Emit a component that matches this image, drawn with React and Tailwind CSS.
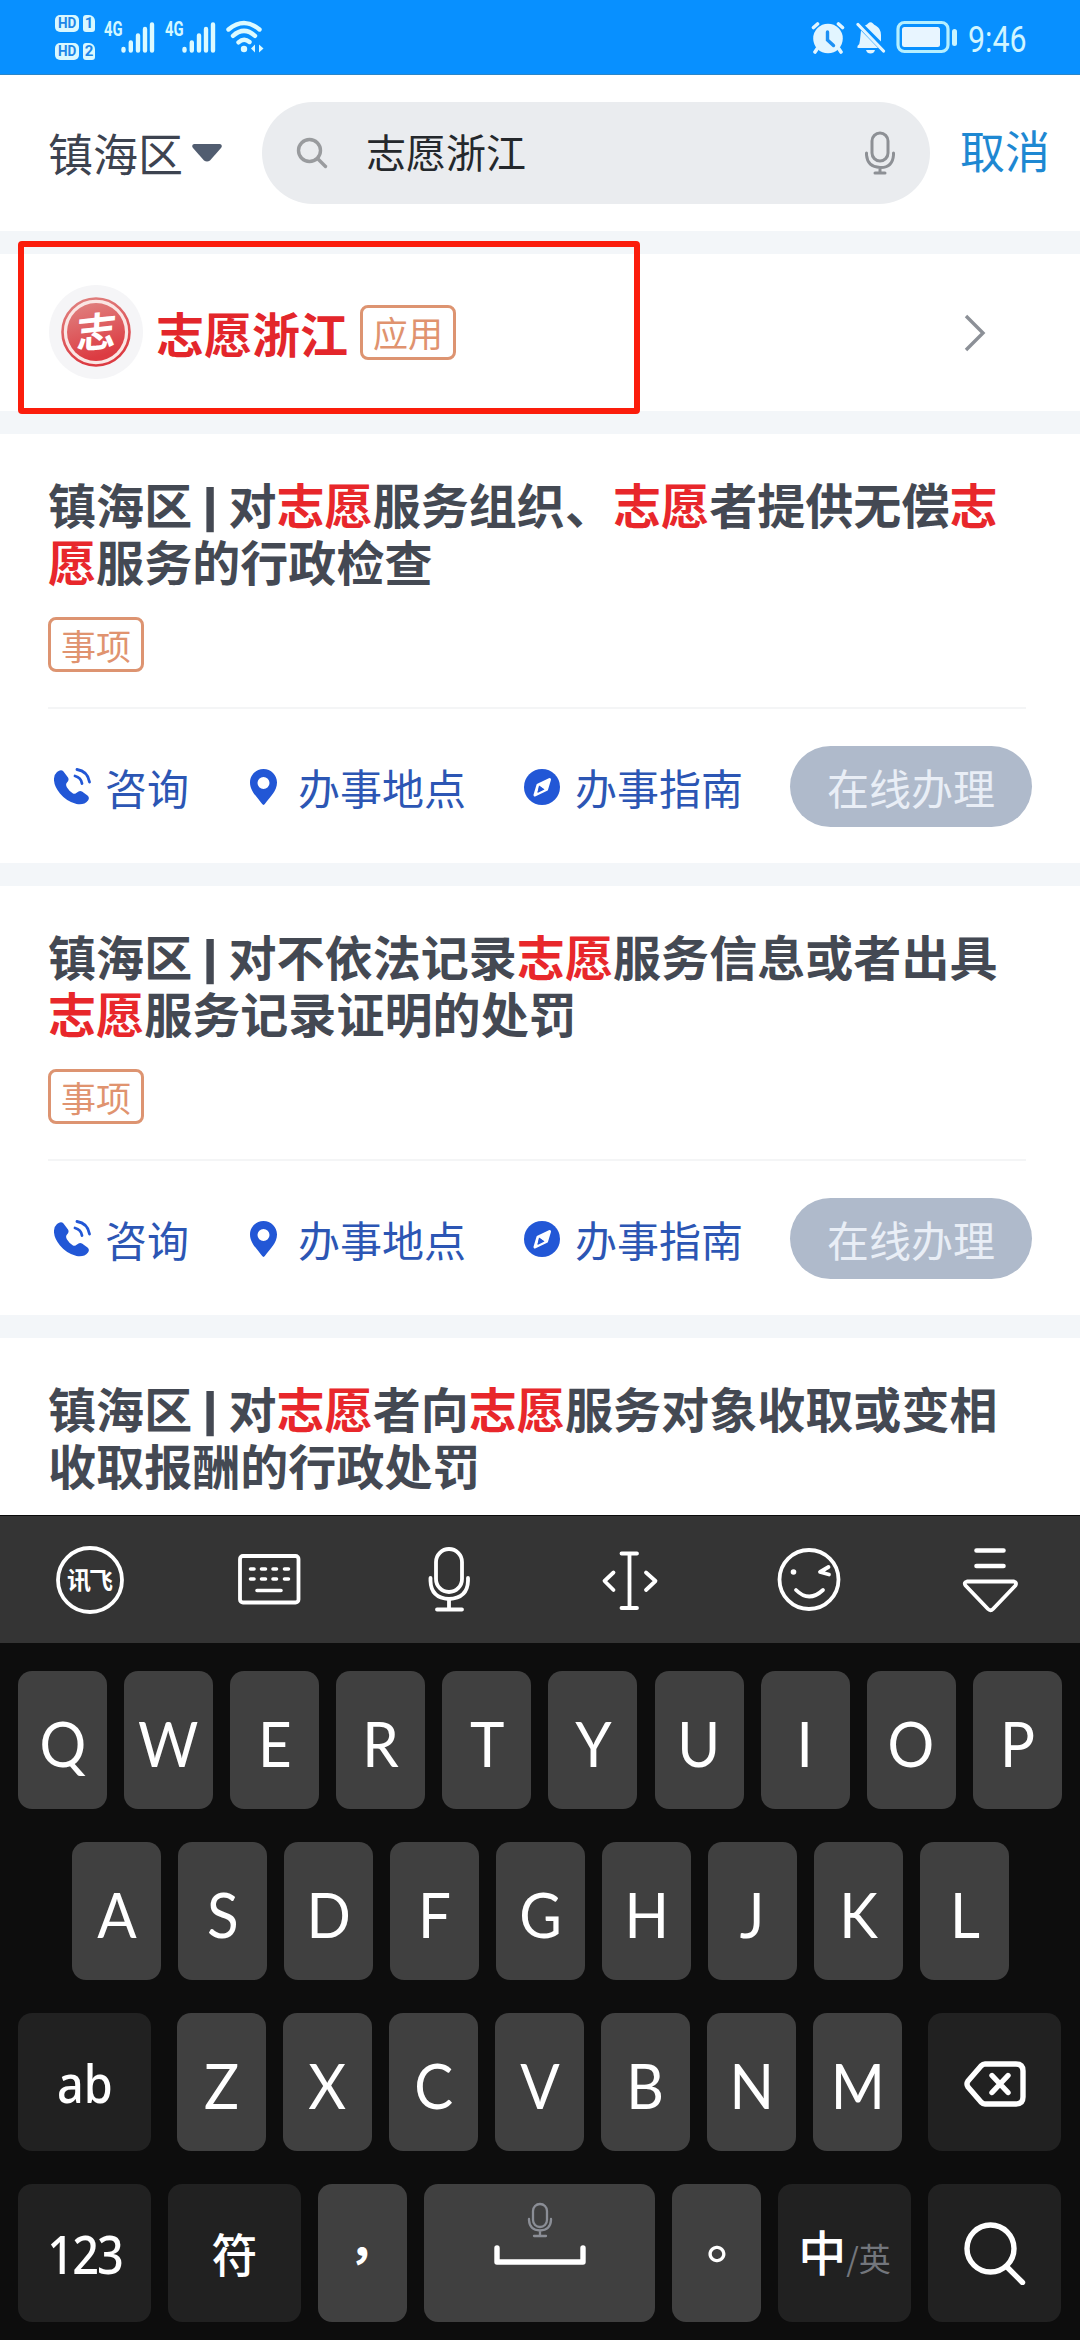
import React from "react";

function SignalBars() {
  return (
    <svg width="34" height="31" viewBox="0 0 34 31" className="mt-[22px]" stroke="#dcfaff" strokeWidth="4.400" strokeLinecap="round">
      <path d="M2.500 27V28.500M9.800 20.500V28.500M17 13.500V28.500M24 7V28.500M31 2.500V28.500" />
    </svg>
  );
}

function HdBadge({ n }) {
  return (
    <div className="flex h-[17px] gap-[4px] text-[15px] leading-[17px] font-bold text-[#1d86e8] font-['Roboto',sans-serif]">
      <span className="flex w-[24px] items-center justify-center rounded-[5px] bg-[#d9f8ff]"><span className="scale-x-[0.9]">HD</span></span>
      <span className="flex w-[12px] items-center justify-center rounded-[3px] rounded-tr-[6px] bg-[#d9f8ff]">{n}</span>
    </div>
  );
}

function FourG() {
  return (
    <span className="mt-[19px] w-[17px] origin-left scale-x-[0.74] text-[20px] leading-[20px] font-bold text-[#d3f8ff] font-['Roboto',sans-serif]">4G</span>
  );
}

function StatusBar() {
  return (
    <div className="flex h-[75px] shrink-0 items-start border-b border-[#2b86c9] bg-[#0890ff]">
      <div className="ml-[55px] mt-[15px] flex w-[49px] flex-col gap-[11px]">
        <HdBadge n="1" />
        <HdBadge n="2" />
      </div>
      <FourG />
      <SignalBars />
      <div className="w-[10px]" />
      <FourG />
      <SignalBars />
      <svg width="40" height="34" viewBox="0 0 40 34" className="ml-[8px] mt-[20px]" fill="none" stroke="#dcfaff" strokeWidth="4.400" strokeLinecap="round">
        <path d="M4.500 9.500Q20 -3.500 35.500 9.500M9 15.800Q20 6 31 15.800M14.500 22.300Q20 17.500 25.500 22" />
        <circle cx="20" cy="29" r="3.200" fill="#dcfaff" stroke="none" />
        <path d="M31 24.500v8l-4-4zM35 24.500v8l4.500-4z" fill="#dcfaff" stroke="none" />
      </svg>
      <div className="flex-1" />
      <svg width="34" height="34" viewBox="0 0 34 34" className="mt-[21px]" fill="none" strokeLinecap="round">
        <path d="M2.500 6.500l4-3.500M31.500 6.500l-4-3.500M6 28l-2 3M28 28l2 3" stroke="#e2f5ff" strokeWidth="3.600" />
        <circle cx="17" cy="17.500" r="14.800" fill="#e2f5ff" />
        <path d="M16.500 11v8l6 5.500" stroke="#1d90f4" strokeWidth="3.400" />
      </svg>
      <svg width="30" height="34" viewBox="0 0 30 34" className="ml-[11px] mt-[21px]">
        <path d="M9 4.500Q11.500 3.500 12 2.500Q14.500 0 17 2.500Q18 4 20 4.700Q25 7.500 25 14L25 20.500Z" fill="#e2f5ff" />
        <path d="M5 9.500L22 27H1.500V25Q4 23 4 19Z" fill="#e2f5ff" />
        <path d="M10 29h9q-1 3.500-4.500 3.500T10 29z" fill="#e2f5ff" />
        <path d="M2 3.500L27.500 30" stroke="#e2f5ff" strokeWidth="3.200" strokeLinecap="round" />
      </svg>
      <svg width="62" height="34" viewBox="0 0 62 34" className="ml-[10px] mt-[20px]">
        <rect x="2" y="2.500" width="50" height="29" rx="6.500" fill="none" stroke="#b5efff" strokeWidth="3.200" />
        <rect x="6" y="7" width="38" height="20" rx="2.500" fill="#e8f5ff" />
        <rect x="56" y="9" width="5" height="17" rx="2.500" fill="#c9f4ff" />
      </svg>
      <span className="ml-[10px] mt-[21px] w-[112px] origin-left scale-x-[0.82] text-[37px] leading-[37px] text-[#d0f5ff] font-['Roboto',sans-serif]">9:46</span>
    </div>
  );
}

function SearchHeader() {
  return (
    <div className="flex h-[156px] shrink-0 items-center bg-white">
      <span className="-mt-[1px] ml-[48px] w-[144px] text-[45px] leading-[60px] text-[#3d4350]">镇海区</span>
      <svg width="30" height="18" viewBox="0 0 30 18"><path d="M2 0h26q3 1 1 4L18 16.500q-3 2-6 0L1 4Q-1 1 2 0z" fill="#515d70" /></svg>
      <div className="ml-[40px] flex h-[102px] w-[668px] items-center rounded-full bg-[#eaecef]">
        <svg width="32" height="32" viewBox="0 0 32 32" className="ml-[34px]" fill="none" stroke="#999b9e" strokeWidth="3.400" strokeLinecap="round">
          <circle cx="13.500" cy="13.500" r="11" /><path d="M21.500 21.500l8 8" />
        </svg>
        <span className="-mt-[5px] ml-[38px] flex-1 text-[40px] leading-[54px] text-[#24282c]">志愿浙江</span>
        <svg width="32" height="44" viewBox="0 0 32 44" className="mr-[34px]" fill="none" stroke="#8d9095" strokeWidth="3" strokeLinecap="round">
          <rect x="8" y="2" width="16" height="28" rx="8" /><path d="M2.500 22v2Q3.500 36 16 36.500T29.500 24V22M16 36.500V42M11 42h10" />
        </svg>
      </div>
      <span className="-mt-[7px] ml-[30px] text-[45px] leading-[60px] text-[#1e88d2]">取消</span>
    </div>
  );
}

function Tag({ children }) {
  return (
    <span className="flex h-[55px] w-[96px] items-center justify-center rounded-[8px] border-[3px] border-[#dd9471] text-[35px] leading-[50px] text-[#e0936f]">{children}</span>
  );
}

function AppResult() {
  return (
    <div className="relative h-[157px] shrink-0 bg-white">
      <div className="ml-[48px] flex h-[156px] items-center">
        <svg width="96" height="96" viewBox="0 0 96 96">
          <defs>
            <linearGradient id="seal" x1="0" y1="0" x2="0.3" y2="1">
              <stop offset="0" stopColor="#e08583" />
              <stop offset="1" stopColor="#dc3b42" />
            </linearGradient>
          </defs>
          <circle cx="48" cy="48" r="47" fill="#f5f5f7" />
          <circle cx="48" cy="48" r="33.500" fill="#fae6e4" stroke="url(#seal)" strokeWidth="2.600" />
          <circle cx="48" cy="48" r="29" fill="url(#seal)" />
          <text x="48" y="62" fontSize="40" fontWeight="700" fill="#fff" textAnchor="middle" transform="translate(8 0) rotate(-6 48 48) skewX(-9)">志</text>
        </svg>
        <span className="ml-[12px] w-[204px] text-[48px] leading-[60px] font-bold text-[#e3262b]">志愿浙江</span>
        <Tag>应用</Tag>
      </div>
      <svg width="24" height="40" viewBox="0 0 24 40" className="absolute left-[963px] top-[59px]" fill="none" stroke="#8c9097" strokeWidth="3.400"><path d="M3 3l17 17L3 37" /></svg>
      <div className="absolute left-[18px] top-[-13px] h-[173px] w-[622px] rounded-[4px] border-[6px] border-[#fb1d0c]" />
    </div>
  );
}

function PhoneIcon() {
  return (
    <svg width="37" height="37" viewBox="0 0 37 37" fill="none" stroke="#2257d6" strokeLinecap="round">
      <path d="M3 4Q7 .8 9.500 3.500L14 9.500Q15.500 12 13 14.500Q11.200 16.500 13 19.500Q15.500 23.500 19 25.500Q21 26.500 23 24.500Q25.500 22 28 23.500L33.500 27.500Q36 29.500 34 32.500Q30 37.500 22.500 36Q12.500 33.500 6 25.500Q-.5 17.500 0 10.500Q.3 6.300 3 4Z" fill="#2257d6" stroke="none" />
      <path d="M21 8Q27 9.500 28 15.500" strokeWidth="2.800" /><path d="M23 1.500Q33.500 3 35.500 14" strokeWidth="2.800" />
    </svg>
  );
}

function PinIcon() {
  return (
    <svg width="27" height="36" viewBox="0 0 27 36"><path fillRule="evenodd" d="M13.500 0C6 0 0 6 0 13.500C0 22 7 28 12 34.800Q13.500 37 15 34.800C20 28 27 22 27 13.500C27 6 21 0 13.500 0ZM13.500 8a6 6 0 1 1 0 12a6 6 0 1 1 0-12Z" fill="#2257d6" /></svg>
  );
}

function CompassIcon() {
  return (
    <svg width="36" height="36" viewBox="0 0 36 36">
      <circle cx="18" cy="18" r="18" fill="#2257d6" />
      <path d="M25.500 10.500L22.500 20.500L11 26L14 16Z" fill="#2257d6" stroke="#fff" strokeWidth="3" strokeLinejoin="round" />
      <path d="M14 16L20.500 20.500L22.500 20.500L25.500 10.500Z" fill="#fff" />
      <path d="M15 16.500L20.500 20.500L13.500 24Z" fill="#2257d6" />
    </svg>
  );
}

function Hit({ children }) {
  return <span className="text-[#e8272b]">{children}</span>;
}

function Region() {
  return (
    <>
      镇海区 <span className="inline-block origin-center scale-x-[1.6] scale-y-[0.83]">|</span>{" "}
    </>
  );
}

function ServiceCard({ children }) {
  return (
    <div className="h-[429px] shrink-0 bg-white px-[48px] pt-[41px]">
      <div className="text-[48px] leading-[57px] font-bold tracking-[0.07px] whitespace-nowrap text-[#444953]"><Region />{children}</div>
      <div className="mt-[28px]"><Tag>事项</Tag></div>
      <div className="mt-[35px] h-[2px] w-[978px] bg-[#f4f5f6]" />
      <div className="mt-[37px] flex h-[81px] items-center text-[42px] leading-[60px] whitespace-nowrap text-[#2c56b4]">
        <div className="ml-[6px] flex w-[196px] items-center gap-[14px]"><PhoneIcon /><span>咨询</span></div>
        <div className="flex w-[274px] items-center gap-[21px]"><PinIcon /><span>办事地点</span></div>
        <div className="flex w-[266px] items-center gap-[15px]"><CompassIcon /><span>办事指南</span></div>
        <div className="flex h-[81px] w-[242px] items-center justify-center rounded-full bg-[#afbacb] text-[#e9eef6]">在线办理</div>
      </div>
    </div>
  );
}

function ToolIcon({ children }) {
  return (
    <div className="flex flex-1 justify-center">
      <svg width="80" height="80" viewBox="0 0 80 80" fill="none" stroke="#fff" strokeWidth="3.800" strokeLinecap="round" strokeLinejoin="round">{children}</svg>
    </div>
  );
}

function Toolbar() {
  return (
    <div className="flex h-[128px] items-center border-t border-[#0a0a0a] bg-[#343434]">
      <ToolIcon>
        <circle cx="40" cy="40" r="32" />
        <text x="40" y="48.500" fontSize="24" fontWeight="700" fill="#fff" stroke="none" textAnchor="middle" textLength="46">讯飞</text>
      </ToolIcon>
      <ToolIcon>
        <rect x="10" y="16" width="58.500" height="46.500" rx="3" />
        <path d="M20.500 29h3.500M31.500 29h4M43 29h3.500M54.500 29h4M20.500 39h3.500M31.500 39h4M43 39h3.500M54.500 39h4M27 50.500h24" strokeWidth="3.600" />
      </ToolIcon>
      <ToolIcon>
        <rect x="26" y="9" width="26" height="43" rx="13" />
        <path d="M20.500 38v3Q21 58 39 59Q57.500 58 58 41V38M39 59V69.500M27 69.500h25" />
      </ToolIcon>
      <ToolIcon>
        <path d="M31.500 13.500h15.500M31.500 68h15.500M39.500 13.500V68M23.500 32.500L14.500 41l9 9M56 32.500L65.500 41l-9.500 9" />
      </ToolIcon>
      <ToolIcon>
        <circle cx="39" cy="39.500" r="29.500" />
        <circle cx="23.500" cy="32" r="2.800" fill="#fff" stroke="none" />
        <path d="M58.500 27L50 32l9 2.500M26 50Q39 63 53 50" />
      </ToolIcon>
      <ToolIcon>
        <path d="M26.500 10.500h27M26.500 26h27" strokeWidth="4.600" />
        <path d="M17 41.500H64Q67 42.500 65.500 45.500L43 69Q40.500 71.500 38 69L15.500 45.500Q13.500 42.500 17 41.500Z" />
      </ToolIcon>
    </div>
  );
}

function LetterKey({ children }) {
  return (
    <div className="flex h-[138px] w-[89px] items-center justify-center rounded-[14px] bg-[#404040] pt-[5px] text-[62px] leading-[62px] text-white font-['Lato',sans-serif]">
      <span className="scale-x-[0.94]">{children}</span>
    </div>
  );
}

function DarkKey({ children }) {
  return (
    <div className="flex h-[138px] w-[133px] items-center justify-center rounded-[14px] bg-[#212121] text-white">{children}</div>
  );
}

function Keyboard() {
  return (
    <div className="h-[825px] shrink-0 bg-[#0d0d0d]">
      <Toolbar />
      <div className="flex flex-col gap-[33px] px-[18px] pt-[28px]">
        <div className="flex gap-[17.100px]">{"QWERTYUIOP".split("").map((k) => <LetterKey key={k}>{k}</LetterKey>)}</div>
        <div className="flex gap-[17px] pl-[54px]">{"ASDFGHJKL".split("").map((k) => <LetterKey key={k}>{k}</LetterKey>)}</div>
        <div className="flex gap-[26px]">
          <DarkKey><span className="mt-[1px] scale-x-[0.9] text-[52px] leading-[60px] font-medium font-['Noto_Sans',sans-serif]">ab</span></DarkKey>
          <div className="flex gap-[17px]">{"ZXCVBNM".split("").map((k) => <LetterKey key={k}>{k}</LetterKey>)}</div>
          <DarkKey>
            <svg width="62" height="46" viewBox="0 0 62 46" fill="none" stroke="#fff" strokeWidth="5.400" strokeLinecap="round" strokeLinejoin="round" className="mt-[3px]">
              <path d="M21 3H52Q59 3 59 10V36Q59 43 52 43H21Q19 43 17 41L4 26Q2 23 4 20L17 5Q19 3 21 3Z" /><path d="M28 14.500l16 17M44 14.500l-16 17" />
            </svg>
          </DarkKey>
        </div>
        <div className="flex gap-[17px]">
          <DarkKey><span className="mt-[1px] scale-x-[0.9] text-[52px] leading-[60px] font-medium tracking-[-2px] font-['Noto_Sans',sans-serif]">123</span></DarkKey>
          <DarkKey><span className="-mt-[2px] text-[46px] leading-[60px] font-medium">符</span></DarkKey>
          <div className="flex h-[138px] w-[89px] items-center justify-center rounded-[14px] bg-[#404040]">
            <span className="-mt-[32px] ml-[20px] text-[48px] leading-[48px] font-bold text-white">，</span>
          </div>
          <div className="flex h-[138px] w-[231px] flex-col items-center rounded-[14px] bg-[#404040]">
            <svg width="26" height="36" viewBox="0 0 26 36" className="mt-[18px]" fill="none" stroke="#8b8e96" strokeWidth="2.300" strokeLinecap="round">
              <rect x="6" y="2" width="14" height="23" rx="7" /><path d="M2 17v1Q2.500 28 13 28.500Q23.500 28 24 18V17M13 28.500V34M7 34h12" />
            </svg>
            <svg width="92" height="20" viewBox="0 0 92 20" className="mt-[7px]" fill="none" stroke="#fff" strokeWidth="5.400" strokeLinecap="round" strokeLinejoin="round"><path d="M3 3V17H89V3" /></svg>
          </div>
          <div className="flex h-[138px] w-[89px] items-center justify-center rounded-[14px] bg-[#404040]">
            <span className="-mt-[34px] ml-[34px] text-[54px] leading-[54px] font-medium text-white">。</span>
          </div>
          <DarkKey>
            <div className="flex items-baseline"><span className="text-[48px] leading-[60px] font-medium">中</span><span className="text-[32px] leading-[60px] text-[#73767c]">/英</span></div>
          </DarkKey>
          <DarkKey>
            <svg width="64" height="64" viewBox="0 0 64 64" fill="none" stroke="#fff" strokeWidth="5.400" strokeLinecap="round"><circle cx="27.500" cy="27.500" r="23.500" /><path d="M44 46l15.500 15.500" /></svg>
          </DarkKey>
        </div>
      </div>
    </div>
  );
}

export default function App() {
  return (
    <div lang="zh-CN" className="flex h-[2340px] w-[1080px] flex-col overflow-hidden bg-[#f3f6f9] font-['Noto_Sans_CJK_SC',sans-serif]">
      <StatusBar />
      <SearchHeader />
      <div className="flex h-[1284px] shrink-0 flex-col gap-[23px] pt-[23px]">
        <AppResult />
        <ServiceCard>对<Hit>志愿</Hit>服务组织、<Hit>志愿</Hit>者提供无偿<Hit>志</Hit><br /><Hit>愿</Hit>服务的行政检查</ServiceCard>
        <ServiceCard>对不依法记录<Hit>志愿</Hit>服务信息或者出具<br /><Hit>志愿</Hit>服务记录证明的处罚</ServiceCard>
        <div className="min-h-0 flex-1 overflow-hidden bg-white px-[48px] pt-[41px] text-[48px] leading-[57px] font-bold tracking-[0.07px] whitespace-nowrap text-[#444953]">
          <Region />对<Hit>志愿</Hit>者向<Hit>志愿</Hit>服务对象收取或变相<br />收取报酬的行政处罚
        </div>
      </div>
      <Keyboard />
    </div>
  );
}
